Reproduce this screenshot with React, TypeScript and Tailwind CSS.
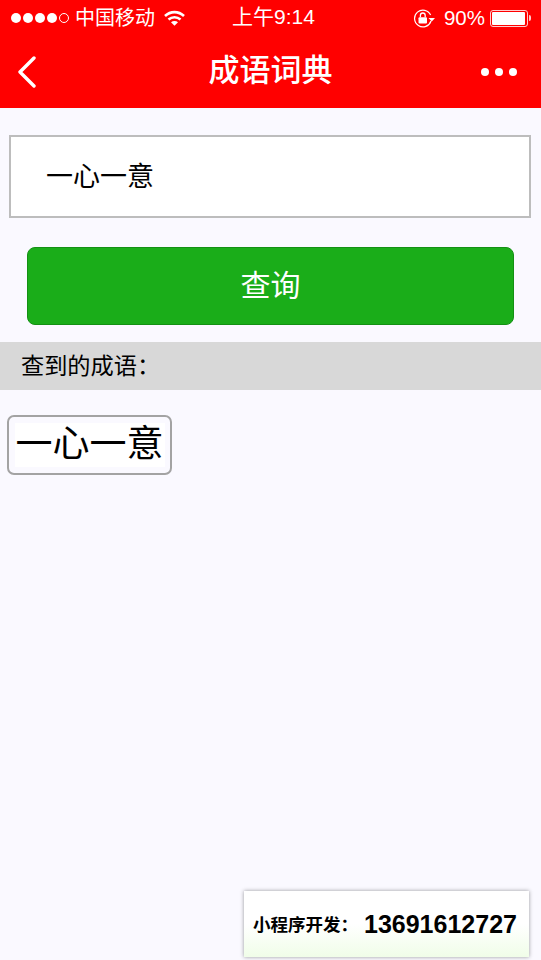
const cjk = 'font-["Liberation_Sans","Noto_Sans_CJK_SC",sans-serif]';

function SignalDots() {
  return (
    <div className="flex items-center gap-[2px]">
      <span className="h-[10px] w-[10px] rounded-full bg-white" />
      <span className="h-[10px] w-[10px] rounded-full bg-white" />
      <span className="h-[10px] w-[10px] rounded-full bg-white" />
      <span className="h-[10px] w-[10px] rounded-full bg-white" />
      <span className="h-[10px] w-[10px] rounded-full border border-white" />
    </div>
  );
}

function WifiIcon() {
  return (
    <svg width="21" height="16" viewBox="0 0 21 16" fill="none">
      <path d="M1 6C6.5 0.8 14.5 0.8 20 6" stroke="white" strokeWidth="2.6" />
      <path d="M4.5 9.5C8 6.4 13 6.4 16.5 9.5" stroke="white" strokeWidth="2.6" />
      <path d="M7 12.2C9 10.6 12 10.6 14 12.2L10.5 15.8Z" fill="white" />
    </svg>
  );
}

function RotationLockIcon() {
  return (
    <svg width="24" height="19" viewBox="0 0 24 19" fill="none">
      <path d="M18 12A8.4 8.4 0 1 1 17.6 6" stroke="white" strokeWidth="1.2" />
      <path d="M15.5 9H22L18.8 12.5Z" fill="white" />
      <rect x="5.5" y="8.2" width="8.5" height="6.3" rx="1" fill="white" />
      <path d="M7.4 8.2V6.4a2.4 2.4 0 0 1 4.8 0V8.2" stroke="white" strokeWidth="1.3" />
    </svg>
  );
}

function Battery() {
  return (
    <div className="flex items-center">
      <div className="h-[17px] w-[38px] rounded-[3px] border border-white/80 p-px">
        <div className="h-full w-[33px] rounded-[1px] bg-white" />
      </div>
      <div className="ml-px h-[6px] w-[2px] rounded-r-sm bg-white/80" />
    </div>
  );
}

function BackChevron() {
  return (
    <svg width="20" height="32" viewBox="0 0 20 32" fill="none">
      <path d="M17 2L3 16L17 30" stroke="white" strokeWidth="3.4" strokeLinecap="round" strokeLinejoin="round" />
    </svg>
  );
}

export default function App() {
  return (
    <div className={`relative h-[960px] w-[541px] overflow-hidden bg-[#faf9ff] text-black ${cjk}`}>
      {/* status bar + nav */}
      <div className="h-[108px] bg-[#ff0000] text-white">
        <div className="relative flex h-[36px] items-center justify-between pl-[11px] pr-[10px]">
          <div className="flex items-center">
            <SignalDots />
            <span className="ml-[6px] text-[20px] leading-none">中国移动</span>
            <span className="ml-[9px]"><WifiIcon /></span>
          </div>
          <span className="absolute left-[232px] top-[6px] text-[21px] leading-[22px]">上午9:14</span>
          <div className="flex items-center">
            <RotationLockIcon />
            <span className="ml-[7px] mr-[5px] text-[20.5px] leading-none">90%</span>
            <Battery />
          </div>
        </div>
        <div className="relative flex h-[72px] items-center justify-between pl-[17px] pr-[24px]">
          <BackChevron />
          <span className="absolute inset-x-0 top-[18px] text-center text-[31px] font-medium leading-[34px]">成语词典</span>
          <div className="flex items-center gap-[6px]">
            <span className="h-[8px] w-[8px] rounded-full bg-white" />
            <span className="h-[8px] w-[8px] rounded-full bg-white" />
            <span className="h-[8px] w-[8px] rounded-full bg-white" />
          </div>
        </div>
      </div>

      {/* search */}
      <div className="mx-[9px] mt-[27px] flex h-[83px] w-[522px] items-center border-2 border-[#bdbdbd] bg-white pl-[35px] pt-[2px] text-[27px]">
        一心一意
      </div>
      <button className="mx-[27px] mt-[29px] flex h-[78px] w-[487px] items-center justify-center rounded-[8px] border border-[#149014] bg-[#1aad19] pb-[2px] text-[30px] text-white">
        查询
      </button>

      {/* results */}
      <div className="mt-[17px] flex h-[48px] items-center bg-[#d8d8d8] pl-[21px] text-[23.2px]">
        查到的成语：
      </div>
      <div className="ml-[7px] mt-[25px] flex h-[60px] w-[165px] items-center justify-center rounded-[7px] border-2 border-[#a3a3a3]">
        <span className="bg-white px-px text-[37px] leading-[44px]">一心一意</span>
      </div>

      {/* floating contact */}
      <div className="absolute left-[244px] top-[891px] flex h-[66px] w-[285px] items-center whitespace-nowrap bg-gradient-to-b from-white from-50% to-[#f0fde8] pl-[9px] pt-[2px] font-bold shadow-[0_0_4px_rgba(0,0,0,0.4)]">
        <span className="text-[17.5px]">小程序开发：</span>
        <span className="ml-[6px] text-[25px]">13691612727</span>
      </div>
    </div>
  );
}
